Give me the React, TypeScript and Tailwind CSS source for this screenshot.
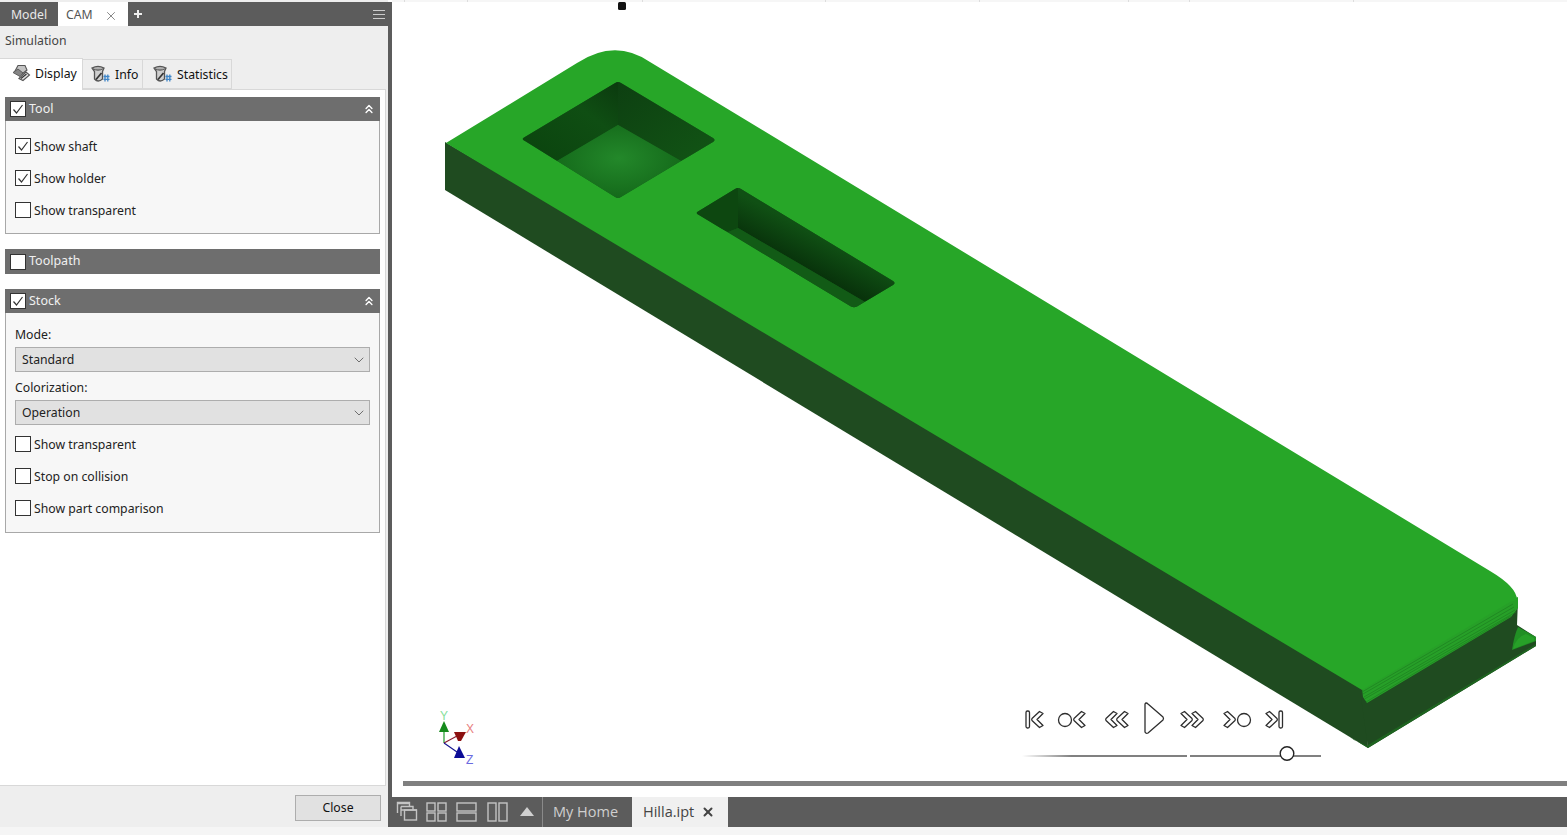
import { ChevronDown, ChevronsUp, X } from "lucide-react";

function Check({ on }: { on?: boolean }) {
  return (
    <span className="w-4 h-4 shrink-0 bg-white border border-[#333] flex items-center justify-center">
      {on && (
        <svg width="14" height="14" viewBox="0 0 14 14" fill="none" stroke="#333" strokeWidth="1.2">
          <path d="M2.5 7.5 L5.5 11 L11.5 3" />
        </svg>
      )}
    </span>
  );
}

function Row({ label, on }: { label: string; on?: boolean }) {
  return (
    <div className="h-8 flex items-center">
      <Check on={on} />
      <span className="ml-[3px] pt-[2px] text-[#222]">{label}</span>
    </div>
  );
}

function GroupHeader({ title, on, open = true }: { title: string; on?: boolean; open?: boolean }) {
  return (
    <div className={`flex items-center bg-[#6e6e6e] pl-[5px] pr-[4px] text-white ${open ? "h-6" : "h-[25px]"}`}>
      <Check on={on} />
      <span className="ml-[3px] text-[12.5px] flex-1 text-[#f0f0f0]">{title}</span>
      {open && <ChevronsUp size={14} strokeWidth={2.4} className="text-white" />}
    </div>
  );
}

function Select({ value }: { value: string }) {
  return (
    <div className="h-[25px] bg-[#e1e1e1] border border-[#adadad] flex items-center justify-between pl-[6px] pr-[2px] text-[#222]">
      <span className="pt-[2px]">{value}</span>
      <ChevronDown size={16} strokeWidth={1} className="text-[#333]" />
    </div>
  );
}

function BitIcon() {
  return (
    <svg width="20" height="18" viewBox="0 0 20 18" className="shrink-0">
      <path d="M1 3 Q7 0 13 3 L11.5 6.5 L11.5 14 Q7 18 3.5 14 L3.5 6.5 Z" fill="#cfcfcf" stroke="#555" strokeWidth="1.3" />
      <path d="M1.5 3.5 Q7 7 12.5 3.5" fill="#8f8f8f" stroke="#555" strokeWidth="0.9" />
      <path d="M5 14.5 L10.5 8" stroke="#333" strokeWidth="1.7" />
      <path d="M14 9.5 V16.5 M16.8 9.5 V16.5 M12.5 11.5 H18.5 M12.5 14.3 H18.5" stroke="#3f86c8" strokeWidth="1.3" fill="none" />
    </svg>
  );
}

function DisplayIcon() {
  return (
    <svg width="20" height="18" viewBox="0 0 20 18" className="shrink-0 mb-[3px]">
      <path d="M3 7 L6 1.5 L13 1.5 L15 6 L10 10 Z" fill="#c4c4c4" stroke="#555" strokeWidth="1.1" />
      <path d="M1 8.5 L6 5 L11 9 L8 12.5 Z" fill="#858585" stroke="#555" strokeWidth="0.9" />
      <path d="M7 14.5 L14 8 L17.5 11 L11 16.5 Z" fill="#e3e3e3" stroke="#555" strokeWidth="1.1" />
      <path d="M9 14.5 L14.5 10" stroke="#333" strokeWidth="1.2" />
    </svg>
  );
}

function Chevron({ x, dir = 1 }: { x: number; dir?: number }) {
  // x is the tip of the chevron, dir 1 points right
  return (
    <g transform={`translate(${x} 719.5) scale(${dir} 1)`}>
      <path
        d="M-11 -6 L-7.5 -8 L0 -1 Q0.6 0 0 1 L-7.5 8 L-11 6 L-5 0 Z"
        fill="#fff"
        stroke="#2e2e2e"
        strokeWidth="1.3"
        strokeLinejoin="round"
      />
    </g>
  );
}

function Model() {
  return (
    <g>
      <defs>
        <radialGradient id="floorA" cx="50%" cy="45%" r="55%">
          <stop offset="0%" stopColor="#23882a" />
          <stop offset="100%" stopColor="#14691a" />
        </radialGradient>
        <linearGradient id="wallL" x1="0" y1="1" x2="1" y2="0">
          <stop offset="0%" stopColor="#0a420d" />
          <stop offset="65%" stopColor="#0f4e13" />
          <stop offset="100%" stopColor="#0b3a0e" />
        </linearGradient>
        <linearGradient id="wallR" x1="0" y1="0" x2="1" y2="1">
          <stop offset="0%" stopColor="#0d3f11" />
          <stop offset="100%" stopColor="#125615" />
        </linearGradient>
        <linearGradient id="wallB" gradientUnits="userSpaceOnUse" x1="817" y1="235" x2="801" y2="265">
          <stop offset="0%" stopColor="#105014" />
          <stop offset="100%" stopColor="#08330b" />
        </linearGradient>
        <clipPath id="pocketA">
          <path d="M524 137.5 L615 83 Q618 81 621 83 L713 138 Q716 140 713 142 L621 197 Q618 199 615 197 L525 141 Q521 139 524 137.5 Z" />
        </clipPath>
        <clipPath id="pocketB">
          <path d="M698 211.5 L735 189 Q738 187 741 189 L893 281 Q896 283 893 285 L857 306.5 Q854 308 851 306.5 L699 215 Q695 213 698 211.5 Z" />
        </clipPath>
      </defs>

      {/* side + end faces */}
      <path d="M445 142 L1364 680 L1368 748 L445 190 Z" fill="#1f4b20" />
      <path d="M1368 748 L1536 646 L1536 637 L1517 625 L1518 600 L1360 690 Z" fill="#1f4b20" />
      <path d="M1368 748 L1536 646 L1536 644 L1368 745 Z" fill="#1e6420" />
      <path d="M1354 740 L1368 746 L1368 748 L1350 737 Z" fill="#1d621f" />
      {/* little tab at the far end */}
      <path d="M1518 627 L1536 637 L1536 641 L1512 650 Q1514 636 1518 627 Z" fill="#218f24" />
      <path d="M1513 649 Q1516 637 1526 634 L1534 638 L1534 641 Z" fill="#27a028" />

      {/* stepped band */}
      <path d="M1362 688 L1510 600 L1518 597 L1518 608 L1511 617 L1367 703 L1363 697 Z" fill="#27a028" />
      <g stroke="#1c7f20" strokeWidth="0.7" fill="none">
        <path d="M1362 692 L1513 604" />
        <path d="M1363 694 L1514 607" />
        <path d="M1364 697 L1515 610" />
        <path d="M1364.5 699 L1516 612" />
        <path d="M1366 702 L1511 616" />
      </g>

      {/* top face */}
      <path
        d="M446 143 L577 63 Q615 38 650 62 L1490 571 Q1517 587 1517 600 L1510 602 L1362 690 Z"
        fill="#27a628"
      />

      {/* square pocket */}
      <g clipPath="url(#pocketA)">
        <rect x="515" y="75" width="210" height="130" fill="#14691a" />
        <path d="M515 142 L618 81 L618 125 L557 161 Z" fill="url(#wallL)" />
        <path d="M618 78 L722 140 L681 161 L618 125 Z" fill="url(#wallR)" />
        <path d="M618 125 L681 161 L618 199 L557 161 Z" fill="url(#floorA)" />
      </g>

      {/* slot pocket */}
      <g clipPath="url(#pocketB)">
        <rect x="690" y="180" width="212" height="135" fill="#125b16" />
        <path d="M690 215 L738 185 L738 228 L728 232 Z" fill="#0d4710" />
        <path d="M738 185 L902 283 L865 302 L738 228 Z" fill="url(#wallB)" />
        <path d="M728 232 L738 228 L865 302 L854 310 Z" fill="#125b16" />
      </g>
    </g>
  );
}

function Triad() {
  return (
    <g fontFamily="Liberation Sans, sans-serif" fontSize="12">
      <path d="M444 743 V730" stroke="#1d9a2a" strokeWidth="1.2" />
      <path d="M444 743 L457 736" stroke="#8a1a30" strokeWidth="1.1" />
      <path d="M444 743 L457 752" stroke="#141490" strokeWidth="1.1" />
      <path d="M444 721 L449 732 H439 Z" fill="#158a1c" />
      <path d="M454 732 H466 L461 741 H458 Z" fill="#8c1010" />
      <path d="M459 746 L465 758 H454 Z" fill="#0c0c96" />
      <text x="440" y="720" fill="#86e09a">Y</text>
      <text x="466" y="733" fill="#e88080">X</text>
      <text x="466" y="764" fill="#6a6ae0">Z</text>
    </g>
  );
}

function Playback() {
  const line = { fill: "#fff", stroke: "#2e2e2e", strokeWidth: 1.3 };
  return (
    <g>
      <rect x="1026" y="711" width="3.5" height="17" rx="1.5" {...line} />
      <Chevron x={1032} dir={-1} />
      <circle cx="1065" cy="720" r="6.5" {...line} />
      <Chevron x={1074} dir={-1} />
      <Chevron x={1117} dir={-1} />
      <Chevron x={1106} dir={-1} />
      <path d="M1145 704 Q1146 702 1148 704 L1163 717 Q1164 718.5 1163 720 L1148 733 Q1146 734 1145 732 Z" {...line} strokeLinejoin="round" />
      <Chevron x={1192} />
      <Chevron x={1203} />
      <Chevron x={1235} />
      <circle cx="1244" cy="720" r="6.5" {...line} />
      <Chevron x={1277} />
      <rect x="1279" y="711" width="3.5" height="17" rx="1.5" {...line} />
      <defs>
        <linearGradient id="fade" x1="0" y1="0" x2="1" y2="0">
          <stop offset="0%" stopColor="#fff" />
          <stop offset="30%" stopColor="#808080" />
          <stop offset="100%" stopColor="#808080" />
        </linearGradient>
      </defs>
      <rect x="1022" y="755" width="165" height="2" fill="url(#fade)" />
      <rect x="1190" y="755" width="131" height="2" fill="#808080" />
      <circle cx="1287" cy="753.5" r="6.8" fill="#fff" stroke="#222" strokeWidth="1.4" />
    </g>
  );
}

export default function App() {
  const ticks = [404, 467, 642, 825, 979, 1128, 1189, 1353];
  return (
    <div className="w-[1567px] h-[835px] overflow-hidden flex bg-white text-[12.25px] [font-family:'Noto_Sans',sans-serif]">
      {/* left browser panel */}
      <aside className="w-[388px] h-[835px] flex flex-col pt-[2px] bg-[#eeeeee] border-b-8 border-[#f5f5f5]">
        <div className="h-6 shrink-0 bg-[#5c5c5c] flex items-center">
          <div className="w-[58px] pt-[2px] text-center text-[#e8e8e8]">Model</div>
          <div className="w-[70px] h-full bg-white flex items-center pl-[8px] pt-[2px] text-[#555]">
            CAM
            <X size={14} strokeWidth={1} className="ml-[11px] mt-[1px] text-[#333]" />
          </div>
          <svg width="10" height="10" viewBox="0 0 10 10" className="ml-[5px]">
            <path d="M5 1 V9 M1 5 H9" stroke="#eee" strokeWidth="2" />
          </svg>
          <div className="ml-auto mr-[3px] w-3 flex flex-col gap-[3px]">
            <div className="h-px bg-[#ccc]" />
            <div className="h-px bg-[#ccc]" />
            <div className="h-px bg-[#ccc]" />
          </div>
        </div>

        <div className="h-8 shrink-0 flex items-center pl-[5px] pb-[2px] text-[#444]">Simulation</div>

        <div className="h-8 shrink-0 flex items-end relative z-10">
          <div className="w-[83px] h-8 bg-white border-r border-t border-[#d8d8d8] flex items-center pl-[12px] gap-[3px] text-[#111]">
            <DisplayIcon />
            <span>Display</span>
          </div>
          <div className="w-[60px] h-[30px] bg-[#eeeeee] border-r border-t border-b border-[#d8d8d8] flex items-center pl-[8px] gap-[4px] mb-[1px] text-[#111]">
            <BitIcon />
            <span className="pt-[2px]">Info</span>
          </div>
          <div className="w-[89px] h-[30px] bg-[#eeeeee] border-r border-t border-b border-[#d8d8d8] flex items-center pl-[10px] gap-[4px] mb-[1px] text-[#111]">
            <BitIcon />
            <span className="pt-[2px]">Statistics</span>
          </div>
        </div>

        <div className="flex-1 w-[386px] bg-white border-r border-b border-t border-[#d8d8d8] -mt-[1px] pt-[7px] pl-[5px] pr-[5px] flex flex-col gap-[15px]">
          <section>
            <GroupHeader title="Tool" on />
            <div className="bg-[#f7f7f7] border border-t-0 border-[#a8a8a8] pl-[9px] pt-[9px] pb-[7px]">
              <Row label="Show shaft" on />
              <Row label="Show holder" on />
              <Row label="Show transparent" />
            </div>
          </section>

          <section>
            <GroupHeader title="Toolpath" open={false} />
          </section>

          <section>
            <GroupHeader title="Stock" on />
            <div className="bg-[#f7f7f7] border border-t-0 border-[#a8a8a8] pl-[9px] pr-[9px] pb-2">
              <div className="h-[34px] flex items-end pb-[3px] text-[#222]">Mode:</div>
              <Select value="Standard" />
              <div className="h-7 flex items-end pb-[3px] text-[#222]">Colorization:</div>
              <Select value="Operation" />
              <div className="h-[3px]" />
              <Row label="Show transparent" />
              <Row label="Stop on collision" />
              <Row label="Show part comparison" />
            </div>
          </section>
        </div>

        <div className="h-[41px] shrink-0 flex items-start justify-end pt-[9px] pr-[7px]">
          <button className="w-[86px] h-[26px] bg-[#e1e1e1] border border-[#adadad] text-[#111]">Close</button>
        </div>
      </aside>

      <div className="flex-1 flex flex-col">
        {/* viewport */}
        <main className="flex-1 relative border-l-4 border-[#5c5c5c] mt-[2px]">
          <svg width="1179" height="797" viewBox="388 0 1179 797" className="absolute -left-[4px] -top-[2px]">
            <rect x="392" y="0" width="1175" height="2" fill="#f6f6f6" />
            {ticks.map((t) => (
              <rect key={t} x={t} y="0" width="1" height="2" fill="#dddddd" />
            ))}
            <rect x="618" y="2" width="8" height="8" rx="1.5" fill="#111" />
            <Model />
            <Triad />
            <Playback />
          </svg>
          <div className="absolute left-[11px] right-0 top-[779px] h-[5px] bg-[#808080]" />
        </main>

        {/* document tabs */}
        <div className="h-[30px] shrink-0 bg-[#5c5c5c] flex items-center text-[14.5px] [font-family:'Open_Sans',sans-serif]">
          <svg width="146" height="30" viewBox="0 0 146 30" className="ml-[8px] shrink-0" fill="none" stroke="#c4c4c4" strokeWidth="1.4">
            <path d="M1.5 6.5 H13.5 M1.5 6.5 V16 M1.5 6.5 V5.5 H13.5 V9" />
            <path d="M5 9.5 H17 V13 M5 9.5 V19 M5 13 H21" />
            <rect x="8.5" y="13" width="12" height="10" />
            <rect x="31" y="6" width="8" height="8" />
            <rect x="42" y="6" width="8" height="8" />
            <rect x="31" y="16" width="8" height="8" />
            <rect x="42" y="16" width="8" height="8" />
            <rect x="61" y="6" width="19" height="8" />
            <rect x="61" y="16" width="19" height="8" />
            <rect x="92" y="6" width="8" height="18" />
            <rect x="103" y="6" width="8" height="18" />
            <path d="M124 19 L131 10 L138 19 Z" fill="#d0d0d0" stroke="none" />
          </svg>
          <div className="w-px h-full bg-[#8a8a8a]" />
          <div className="w-[89px] pl-[10px] text-[#cfcfcf]">My Home</div>
          <div className="w-[96px] h-full bg-[#f0f0f0] flex items-center pl-[11px] text-[#444]">
            Hilla.ipt
            <X size={14} strokeWidth={3.4} className="ml-[7px] text-[#444]" />
          </div>
        </div>
        <div className="h-2 shrink-0 bg-[#f5f5f5]" />
      </div>
    </div>
  );
}
